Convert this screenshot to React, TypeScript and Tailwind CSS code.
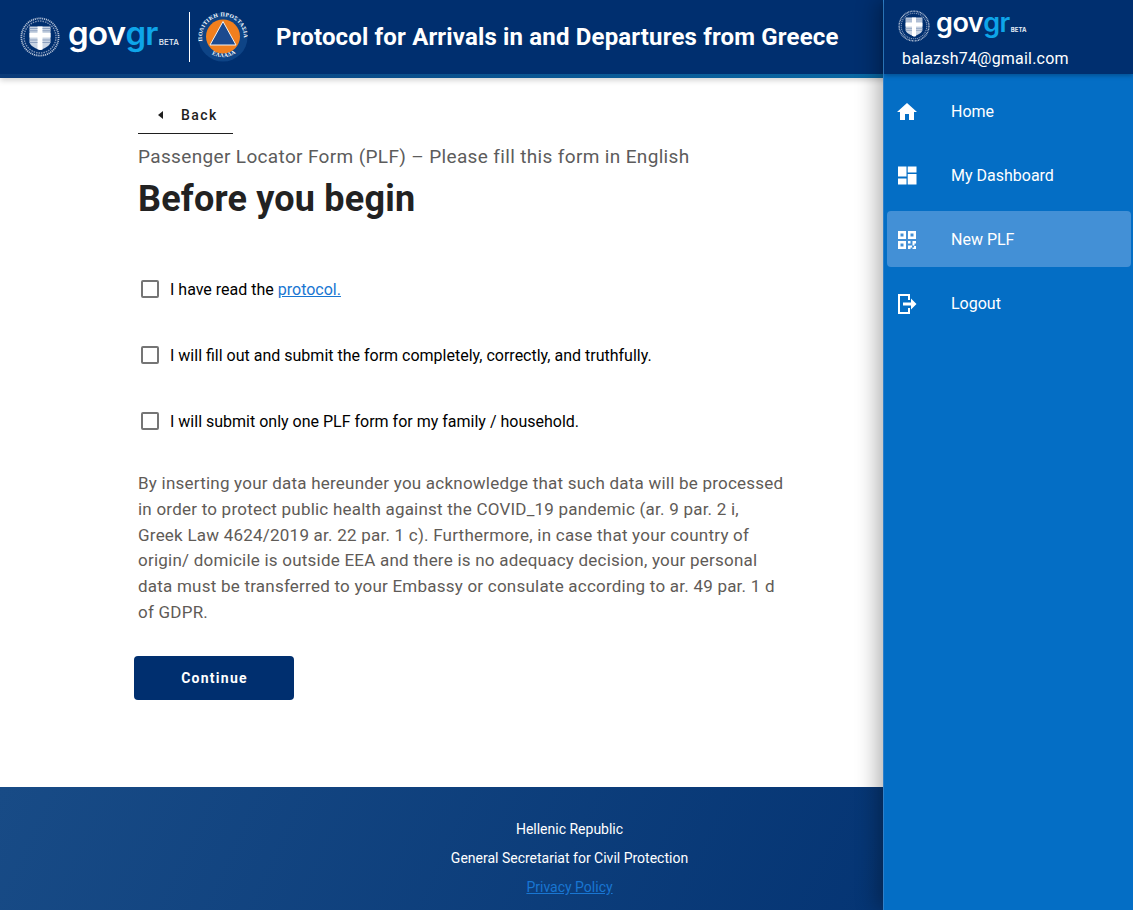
import React from "react";

function Emblem({ size }: { size: number }) {
  return (
    <svg width={size} height={size} viewBox="0 0 40 40" className="shrink-0">
      <circle cx="20" cy="20" r="18.600" fill="none" stroke="#b9c6da" strokeWidth="1.800" strokeDasharray="1.100 0.800" />
      <circle cx="20" cy="20" r="16" fill="none" stroke="#7f95b8" strokeWidth="1.400" strokeDasharray="1.500 1" />
      <path d="M9.500 9.500h21v15c0 4-5 6.500-10.500 8.500-5.500-2-10.500-4.500-10.500-8.500z" fill="#c9d4e3" />
      <path d="M17.500 9.500h5v6.500h8v4.500h-8v12.300L20 33l-2.500-.7V20.500h-8V16h8z" fill="#ffffff" />
      <path d="M9.500 11.500h8M9.500 13.800h8M22.500 11.500h8M22.500 13.800h8M9.500 23h8M9.500 25.500h8M22.500 23h8M22.500 25.500h8" stroke="#8ca0bf" strokeWidth="1" />
    </svg>
  );
}

function GovGr({ big }: { big?: boolean }) {
  return (
    <div className={big ? "flex items-baseline font-['Inter',sans-serif] font-semibold text-[33px] leading-[40px] tracking-[-0.7px]" : "flex items-baseline font-['Inter',sans-serif] font-semibold text-[27px] leading-[32px] tracking-[-0.500px]"}>
      <span className="text-white">gov</span>
      <span className="text-[#0ea5e9]">gr</span>
      <span className={big ? "text-[#e6edf5] text-[8px] tracking-normal font-medium ml-[1px]" : "text-[#e6edf5] text-[6px] tracking-normal font-bold ml-[1px]"}>BETA</span>
    </div>
  );
}

function CivilProtection() {
  return (
    <svg width="50" height="50" viewBox="0 0 50 50" className="shrink-0">
      <circle cx="25" cy="25" r="24.500" fill="#0e4486" />
      <circle cx="25" cy="24.500" r="17" fill="#f07f1e" />
      <path d="M25 9.500L38 33H12z" fill="#1c4a8f" stroke="#f2f2f2" strokeWidth="1" strokeLinejoin="round" />
      <defs>
        <path id="topArc" d="M5.500 33A21 21 0 1 1 44.500 33" />
        <path id="botArc" d="M11 40A21.500 21.500 0 0 0 39 40" />
      </defs>
      <text fontSize="5.600" fill="#ffffff" fontFamily="'Liberation Serif',serif" fontWeight="700" letterSpacing="0.400">
        <textPath href="#topArc" startOffset="5%">ΠΟΛΙΤΙΚΗ ΠΡΟΣΤΑΣΙΑ</textPath>
      </text>
      <text fontSize="5.600" fill="#ffffff" fontFamily="'Liberation Serif',serif" fontWeight="700" letterSpacing="0.300">
        <textPath href="#botArc" startOffset="12%">ΕΛΛΑΔΑ</textPath>
      </text>
    </svg>
  );
}

function Item({ label, active, d }: { label: string; active?: boolean; d: React.ReactNode }) {
  return (
    <div className={active ? "h-[56px] ml-[3px] mr-[2px] pt-[1px] rounded-[4px] bg-[#4390d6] flex items-center pl-[8px]" : "h-[56px] ml-[3px] mr-[2px] pt-[1px] rounded-[4px] flex items-center pl-[8px]"}>
      <svg width="24" height="24" viewBox="0 0 24 24" fill="#fff" className="shrink-0">{d}</svg>
      <span className="ml-[32px] text-[16px] text-white">{label}</span>
    </div>
  );
}

const Check = ({ children }: { children: React.ReactNode }) => (
  <label className="flex items-center h-[18px]">
    <span className="w-[18px] h-[18px] ml-[3px] -mt-[2px] border-2 border-[#757575] rounded-[2px] bg-white shrink-0" />
    <span className="ml-[11px] text-[16px] text-black">{children}</span>
  </label>
);

export default function App() {
  return (
    <div className="relative w-[1133px] h-[910px] overflow-hidden bg-white font-['Roboto',sans-serif]">
      <div className="flex flex-col h-full">
        <header className="relative h-[78px] shrink-0 bg-[#002f6f] flex flex-col shadow-[0_2px_6px_rgba(0,0,0,0.2)]">
          <div className="h-[74px] flex items-center pl-[20px]">
            <Emblem size={40} />
            <div className="ml-[8px] w-[111px]"><GovGr big /></div>
            <div className="ml-[10px] w-px h-[50px] bg-white" />
            <div className="ml-[8px]"><CivilProtection /></div>
            <h1 className="ml-[28px] text-[24px] font-bold tracking-[0.160px] text-white whitespace-nowrap">Protocol for Arrivals in and Departures from Greece</h1>
          </div>
          <div className="h-[4px] bg-gradient-to-r from-[#0a3a78] to-[#0a76b0]" />
        </header>
        <main className="flex-1 pl-[138px] pt-[24px]">
          <div className="w-[95px] h-[32px] border-b border-[#1f1f1f] flex items-start pl-[20px] pt-[3px]">
            <svg width="5" height="8" viewBox="0 0 5 8" className="mt-[6px]"><path d="M5 0v8L0 4z" fill="#1f1f1f" /></svg>
            <span className="ml-[18px] text-[14px] font-medium tracking-[1.400px] text-[#1f1f1f]">Back</span>
          </div>
          <p className="mt-[11px] text-[19px] leading-[24px] tracking-[0.350px] text-[#5c5c5c]">Passenger Locator Form (PLF) – Please fill this form in English</p>
          <h2 className="mt-[8px] text-[36px] leading-[44px] font-bold tracking-[0.200px] text-[#222222]">Before you begin</h2>
          <div className="mt-[60px] flex flex-col gap-[48px]">
            <Check>I have read the <a className="text-[#1976d2] underline">protocol.</a></Check>
            <Check>I will fill out and submit the form completely, correctly, and truthfully.</Check>
            <Check>I will submit only one PLF form for my family / household.</Check>
          </div>
          <p className="mt-[40px] w-[648px] text-[17px] leading-[25.800px] tracking-[0.225px] text-[#5f5b57]">
            By inserting your data hereunder you acknowledge that such data will be processed in order to protect public health against the COVID_19 pandemic (ar. 9 par. 2 i, Greek Law 4624/2019 ar. 22 par. 1 c). Furthermore, in case that your country of origin/ domicile is outside EEA and there is no adequacy decision, your personal data must be transferred to your Embassy or consulate according to ar. 49 par. 1 d of GDPR.
          </p>
          <button className="mt-[30px] -ml-[4px] w-[160px] h-[44px] pt-[1px] pl-[1px] rounded-[4px] bg-[#002f6f] text-white text-[14px] font-bold tracking-[1.250px]">Continue</button>
        </main>
        <footer className="h-[123px] shrink-0 bg-[linear-gradient(115deg,#184b86,#002f6f)] flex flex-col items-center pt-[28px] pl-[6px] text-[14px] leading-[29px] text-white">
          <div>Hellenic Republic</div>
          <div>General Secretariat for Civil Protection</div>
          <a className="text-[#1976d2] underline">Privacy Policy</a>
        </footer>
      </div>
      <aside className="absolute top-0 right-0 bottom-0 w-[250px] bg-[#046ec5] border-l border-[#2f80c9] shadow-[-6px_0_20px_rgba(0,0,0,0.3)] flex flex-col">
        <div className="h-[74px] bg-[#002f6f] pl-[14px] pt-[10px] shadow-[0_2px_4px_rgba(0,0,0,0.25)]">
          <div className="flex items-center h-[32px]">
            <Emblem size={32} />
            <div className="ml-[6px]"><GovGr /></div>
          </div>
          <div className="mt-[7px] ml-[4px] text-[16px] leading-[20px] tracking-[0.200px] text-white">balazsh74@gmail.com</div>
        </div>
        <nav className="pt-[9px] flex flex-col gap-[8px]">
          <Item label="Home" d={<path d="M10 20v-6h4v6h5v-8h3L12 3 2 12h3v8z" />} />
          <Item label="My Dashboard" d={<path d="M3 2.500h8.500v10H3zM3 14.500h8.500v6H3zM12.700 2.500h8.800v6h-8.800zM12.700 10h8.800v10.500h-8.800z" />} />
          <Item label="New PLF" active d={<path fillRule="evenodd" d="M3 3h8v8H3zM5.500 5.500v3h3v-3zM13 3h8v8h-8zM15.500 5.500v3h3v-3zM3 13h8v8H3zM5.500 15.500v3h3v-3zM13 13h2.500v2.500H13zM17.500 13H21v2.500h-1.500v2H17.500zM13 17.500h4v2h-1.500V21H13zM19 18h2v3h-3.500v-1.500H19z" />} />
          <Item label="Logout" d={<path fillRule="evenodd" d="M3 2h12v6h-2V4H5v16h8v-4h2v6H3zM16 6.500L21.500 12 16 17.500V13.500H8v-3h8z" />} />
        </nav>
      </aside>
    </div>
  );
}
